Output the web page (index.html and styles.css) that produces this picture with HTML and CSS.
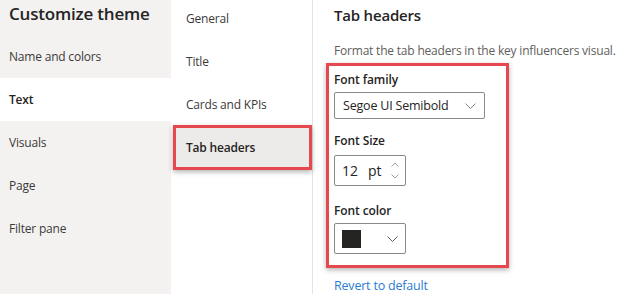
FILE: index.html
```html
<!DOCTYPE html>
<html lang="en">
<head>
    <meta charset="UTF-8">
    <title>Customize theme</title>
    <link rel="stylesheet" href="styles.css">
</head>
<body>
    <div class="sidebar">
        <h1>Customize theme</h1>
        <div class="nav-item">Name and colors</div>
        <div class="nav-item active">Text</div>
        <div class="nav-item">Visuals</div>
        <div class="nav-item">Page</div>
        <div class="nav-item">Filter pane</div>
    </div>

    <div class="subnav">
        <div class="sub-item">General</div>
        <div class="sub-item">Title</div>
        <div class="sub-item">Cards and KPIs</div>
        <div class="sub-item selected">Tab headers</div>
    </div>

    <div class="content">
        <h2>Tab headers</h2>
        <p class="desc">Format the tab headers in the key influencers visual.</p>

        <div class="highlight">
            <div class="field first">
                <label>Font family</label>
                <div class="dropdown">
                    <span>Segoe UI Semibold</span>
                    <svg class="chev" width="11" height="6" viewBox="0 0 11 6"><path d="M0.5 0.5 L5.5 5.5 L10.5 0.5" fill="none" stroke="#8a8886" stroke-width="1"/></svg>
                </div>
            </div>
            <div class="field">
                <label>Font Size</label>
                <div class="spin">
                    <span class="num">12</span>
                    <span class="unit">pt</span>
                    <div class="arrows">
                        <svg width="8" height="5" viewBox="0 0 8 5"><path d="M0.5 4.5 L4 1 L7.5 4.5" fill="none" stroke="#a19f9d" stroke-width="1"/></svg>
                        <svg width="8" height="5" viewBox="0 0 8 5"><path d="M0.5 0.5 L4 4 L7.5 0.5" fill="none" stroke="#a19f9d" stroke-width="1"/></svg>
                    </div>
                </div>
            </div>
            <div class="field last">
                <label>Font color</label>
                <div class="color-pick">
                    <span class="swatch"></span>
                    <svg class="chev" width="11" height="6" viewBox="0 0 11 6"><path d="M0.5 0.5 L5.5 5.5 L10.5 0.5" fill="none" stroke="#605e5c" stroke-width="1"/></svg>
                </div>
            </div>
        </div>

        <a class="revert" href="#">Revert to default</a>
    </div>
</body>
</html>
```

FILE: styles.css
```css
* {
    box-sizing: border-box;
    margin: 0;
    padding: 0;
}

body {
    font-family: "Open Sans", "Noto Sans", sans-serif;
    color: #252423;
    background-color: white;
    display: flex;
    height: 294px;
    overflow: hidden;
}

.sidebar {
    width: 171px;
    flex-shrink: 0;
    background-color: #f3f2f1;
}

.sidebar h1 {
    font-size: 17px;
    font-weight: 600;
    height: 35px;
    line-height: 28px;
    padding-left: 9px;
    letter-spacing: -0.2px;
}

.nav-item {
    height: 43px;
    line-height: 43px;
    padding-left: 9px;
    font-size: 12px;
    letter-spacing: -0.2px;
    color: #3b3a39;
}

.nav-item.active {
    background-color: white;
    font-weight: 600;
    color: #252423;
}

.subnav {
    width: 142px;
    flex-shrink: 0;
    border-right: 1px solid #e6e4e2;
    margin-top: -3px;
}

.sub-item {
    height: 43px;
    line-height: 43px;
    padding-left: 15px;
    font-size: 12px;
    letter-spacing: -0.2px;
    color: #3b3a39;
}

.sub-item.selected {
    margin: -1px 0 0 2px;
    height: 45px;
    line-height: 39px;
    padding-left: 10px;
    background-color: #edebe9;
    border: 3px solid #e5484d;
    font-weight: 600;
    color: #252423;
    box-shadow: 0 2px 5px rgba(0, 0, 0, 0.3);
}

.content {
    flex: 1;
    padding-left: 21px;
    white-space: nowrap;
}

.content h2 {
    font-size: 15px;
    font-weight: 600;
    line-height: 20px;
    margin-top: 5px;
    letter-spacing: -0.2px;
}

.desc {
    font-size: 12px;
    letter-spacing: -0.2px;
    color: #605e5c;
    line-height: 18px;
    margin-top: 17px;
}

.highlight {
    margin-left: -8px;
    margin-top: 3px;
    width: 183px;
    border: 3px solid #e5484d;
    padding: 0 0 11px 5px;
    box-shadow: 0 2px 5px rgba(0, 0, 0, 0.3);
}

.field label {
    display: block;
    font-size: 12px;
    letter-spacing: -0.1px;
    font-weight: 600;
    line-height: 20px;
    margin-top: 12px;
    margin-bottom: 4px;
}

.field.first label {
    margin-top: 4px;
    margin-bottom: 2px;
}

.field.last label {
    margin-top: 15px;
    margin-bottom: 2px;
}

.dropdown {
    width: 151px;
    height: 27px;
    border: 1px solid #8a8886;
    border-radius: 2px;
    display: flex;
    align-items: center;
    justify-content: space-between;
    padding: 0 8px 0 8px;
    font-size: 12.5px;
    letter-spacing: -0.2px;
}

.spin {
    width: 72px;
    height: 31px;
    border: 1px solid #8a8886;
    border-radius: 2px;
    display: flex;
    align-items: center;
    padding-left: 7px;
    font-size: 14px;
}

.spin .unit {
    margin-left: 10px;
}

.spin .arrows {
    margin-left: auto;
    margin-right: 6px;
    display: flex;
    flex-direction: column;
    gap: 7px;
}

.spin .arrows svg {
    display: block;
}

.color-pick {
    width: 72px;
    height: 31px;
    border: 1px solid #8a8886;
    border-radius: 2px;
    display: flex;
    align-items: center;
    justify-content: space-between;
    padding: 0 7px 0 7px;
}

.swatch {
    width: 19px;
    height: 18px;
    background-color: #252423;
}

.revert {
    display: block;
    color: #2b7cd3;
    text-decoration: none;
    font-size: 12.5px;
    letter-spacing: -0.2px;
    line-height: 20px;
    margin-top: 8px;
}
```
